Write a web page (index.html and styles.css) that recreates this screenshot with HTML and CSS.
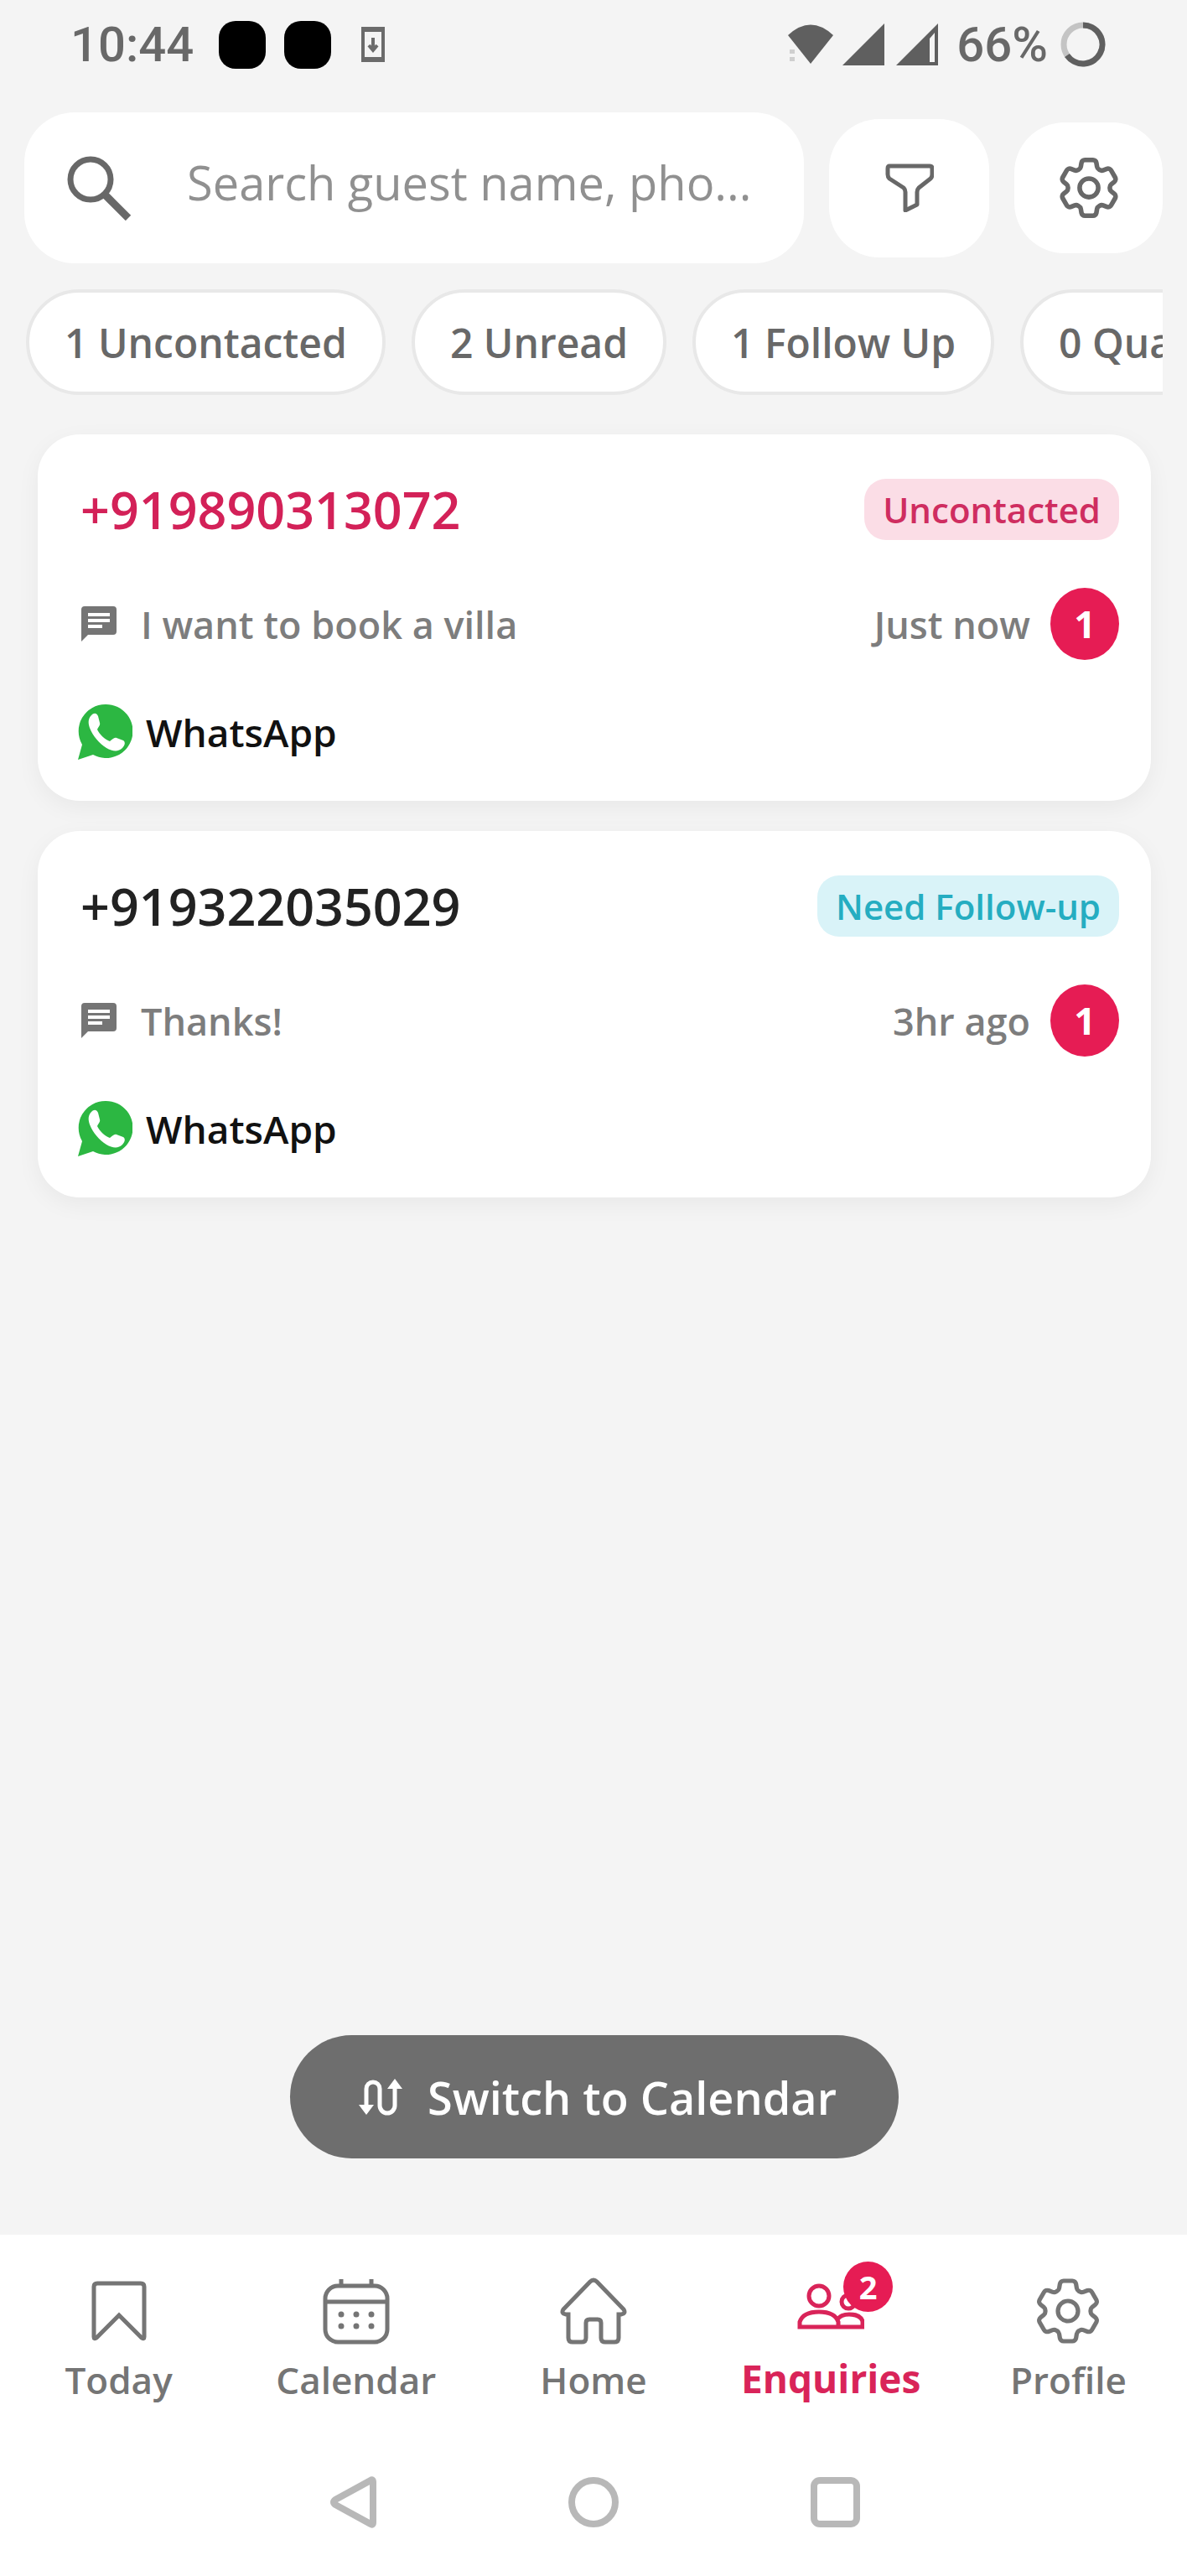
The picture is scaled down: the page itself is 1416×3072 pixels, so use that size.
FILE: index.html
```html
<!DOCTYPE html>
<html lang="en">

<head>
    <meta charset="utf-8">
    <meta name="viewport" content="width=device-width, initial-scale=1.0">
    <title>Enquiries</title>
    <link rel="stylesheet" href="styles.css">
</head>

<body>
    <!-- shared icons -->
    <svg class="sprite" aria-hidden="true">
        <symbol id="gear" viewBox="2 2 20 20">
            <path d="M9.594 3.94c.09-.542.56-.94 1.11-.94h2.593c.55 0 1.02.398 1.11.94l.213 1.281c.063.374.313.686.645.87.074.04.147.083.22.127.325.196.72.257 1.075.124l1.217-.456a1.125 1.125 0 0 1 1.37.49l1.296 2.247a1.125 1.125 0 0 1-.26 1.431l-1.003.827c-.293.241-.438.613-.43.992a7.723 7.723 0 0 1 0 .255c-.008.378.137.75.43.991l1.004.827c.424.35.534.955.26 1.43l-1.298 2.247a1.125 1.125 0 0 1-1.369.491l-1.217-.456c-.355-.133-.75-.072-1.076.124a6.47 6.47 0 0 1-.22.128c-.331.183-.581.495-.644.869l-.213 1.281c-.09.543-.56.94-1.11.94h-2.594c-.55 0-1.019-.398-1.11-.94l-.213-1.281c-.062-.374-.312-.686-.644-.87a6.52 6.52 0 0 1-.22-.127c-.325-.196-.72-.257-1.076-.124l-1.217.456a1.125 1.125 0 0 1-1.369-.49l-1.297-2.247a1.125 1.125 0 0 1 .26-1.431l1.004-.827c.292-.24.437-.613.43-.991a6.932 6.932 0 0 1 0-.255c.007-.38-.138-.751-.43-.992l-1.004-.827a1.125 1.125 0 0 1-.26-1.43l1.297-2.247a1.125 1.125 0 0 1 1.37-.491l1.216.456c.356.133.751.072 1.076-.124.072-.044.146-.086.22-.128.332-.183.582-.495.644-.869l.214-1.28Z" />
            <circle cx="12" cy="12" r="3" />
        </symbol>
        <symbol id="message" viewBox="0 0 44 44">
            <path fill="#757575" d="M5 1h34q4 0 4 4v26q0 4-4 4H9l-8 8V5q0-4 4-4z" />
            <path stroke="#fff" stroke-width="4" d="M9 11h26M9 18h26M9 25h17" />
        </symbol>
        <symbol id="whatsapp" viewBox="0 0 66 68">
            <path fill="#2cb742" d="M34 1a32 32 0 1 1-15 60L1 67l5-18A32 32 0 0 1 34 1z" />
            <path fill="#fff" d="M17 14c3-3 6-3 8 1l2 8c1 3-2 5-3 8 3 6 9 12 15 14 3-2 5-5 8-4l8 3c3 2 2 6-1 9-5 5-12 4-19 0C26 47 19 39 15 29c-2-6-2-11 2-15z" />
        </symbol>
    </svg>

    <div class="status">
        <div class="status_left">
            <span>10:44</span>
            <i class="app_dot"></i>
            <i class="app_dot"></i>
            <svg class="phone" width="28" height="42" viewBox="0 0 28 42" fill="none" stroke="#6b6b6b">
                <path stroke-width="4" d="M2 2h24v38H2z" />
                <path stroke-width="4" d="M2 4h24M2 38h24M14 13v14M9 22l5 6 5-6" />
            </svg>
        </div>
        <div class="status_right">
            <svg width="56" height="50" viewBox="0 0 56 50" fill="#5f5f5f">
                <path d="M1 14Q28-11 55 14L28 48z" />
                <path fill="#cfcfcf" d="M3 31h6v5H3zM3 40h6v5H3z" />
            </svg>
            <svg width="50" height="50" viewBox="0 0 50 50" fill="#5f5f5f">
                <path d="M50 0v50H0z" />
            </svg>
            <svg class="signal" width="50" height="50" viewBox="0 0 50 50" fill="#5f5f5f">
                <path fill-rule="evenodd" d="M50 0v50H0zM46 11l-6 7v28h6z" />
            </svg>
            <span>66%</span>
            <svg class="battery" width="56" height="56" viewBox="0 0 56 56" fill="none" stroke-width="7">
                <circle cx="28" cy="28" r="23" stroke="#c4c4c4" />
                <path stroke="#5f5f5f" d="M28 5a23 23 0 1 1-19 36" />
            </svg>
        </div>
    </div>

    <header>
        <label class="search">
            <svg width="78" height="78" viewBox="0 0 78 78" fill="none" stroke="#686868" stroke-width="7">
                <circle cx="29" cy="29" r="24" />
                <path d="M46 47l28 28" stroke-width="9" />
            </svg>
            <input type="text" placeholder="Search guest name, pho..." aria-label="Search">
        </label>
        <button class="icon_button filter" aria-label="Filter">
            <svg width="58" height="58" viewBox="0 0 58 58" fill="none" stroke="#686868" stroke-width="5" stroke-linejoin="round">
                <path d="M5 3h48q3 0 3 3v7q0 3-2 5L40 29q-2 2-2 5v15l-14 7V34q0-3-2-5L5 18q-2-2-2-5V6q0-3 2-3z" />
            </svg>
        </button>
        <button class="icon_button settings" aria-label="Settings">
            <svg class="gear" width="74" height="74">
                <use href="#gear" />
            </svg>
        </button>
    </header>

    <div class="chips">
        <button>1 Uncontacted</button>
        <button>2 Unread</button>
        <button>1 Follow Up</button>
        <button>0 Qualified</button>
    </div>

    <main>
        <article class="card unread">
            <div class="row">
                <h2>+919890313072</h2>
                <span class="tag uncontacted">Uncontacted</span>
            </div>
            <div class="row message">
                <svg width="44" height="44">
                    <use href="#message" />
                </svg>
                <p>I want to book a villa</p>
                <time>Just now</time>
                <span class="count">1</span>
            </div>
            <div class="row source">
                <svg width="66" height="68">
                    <use href="#whatsapp" />
                </svg>
                <p>WhatsApp</p>
            </div>
        </article>

        <article class="card">
            <div class="row">
                <h2>+919322035029</h2>
                <span class="tag followup">Need Follow-up</span>
            </div>
            <div class="row message">
                <svg width="44" height="44">
                    <use href="#message" />
                </svg>
                <p>Thanks!</p>
                <time>3hr ago</time>
                <span class="count">1</span>
            </div>
            <div class="row source">
                <svg width="66" height="68">
                    <use href="#whatsapp" />
                </svg>
                <p>WhatsApp</p>
            </div>
        </article>

        <button class="switch">
            <svg width="52" height="44" viewBox="0 0 52 44" fill="none" stroke="#fff" stroke-width="5">
                <path d="M9 34V12a8 8 0 0 1 16 0v20a9 9 0 0 0 18 0V10" />
                <path fill="#fff" stroke="none" d="M0 31h18l-9 12zM34 12h18L43 0z" />
            </svg>
            Switch to Calendar
        </button>
    </main>

    <nav class="tabs">
        <a href="#">
            <svg width="80" height="80" viewBox="0 0 80 80">
                <path d="M14 7h52q4 0 4 4v60q0 3-3 1L40 45 13 72q-3 2-3-1V11q0-4 4-4z" />
            </svg>
            Today
        </a>
        <a href="#">
            <svg width="80" height="80" viewBox="0 0 80 80">
                <rect x="3" y="10" width="74" height="67" rx="15" />
                <path d="M3 29h74M22 2v8M58 2v8" />
                <path class="dots" d="M22 44h0M40 44h0M58 44h0M22 58h0M40 58h0M58 58h0" />
            </svg>
            Calendar
        </a>
        <a href="#">
            <svg width="80" height="80" viewBox="0 0 80 80">
                <path d="M36 5q4-4 8 0l32 33q3 5-3 6h-3v28q0 5-5 5H54q-5 0-5-5V54q0-4-4-4H35q-4 0-4 4v18q0 5-5 5H15q-5 0-5-5V44H7q-6-1-3-6z" />
            </svg>
            Home
        </a>
        <a href="#" class="active">
            <span class="badge_holder">
                <svg width="80" height="80" viewBox="0 0 80 80">
                    <circle cx="26" cy="22" r="12" />
                    <circle cx="61" cy="29" r="8" />
                    <path d="M3 59V53q4-12 23-12t23 12v6zM49 59h29v-7q-3-8-16-8-10 0-14 6" />
                </svg>
                <span class="badge">2</span>
            </span>
            Enquiries
        </a>
        <a href="#">
            <svg class="gear" width="84" height="80">
                <use href="#gear" />
            </svg>
            Profile
        </a>
    </nav>

    <div class="system">
        <button aria-label="Back">
            <svg width="60" height="64" viewBox="0 0 60 64">
                <path d="M10 29L52 6q3-2 3 2v48q0 4-3 2L10 35q-4-3 0-6z" />
            </svg>
        </button>
        <button aria-label="Home">
            <svg width="60" height="64" viewBox="0 0 60 64">
                <circle cx="30" cy="32" r="26" />
            </svg>
        </button>
        <button aria-label="Recent">
            <svg width="60" height="64" viewBox="0 0 60 64">
                <rect x="5" y="6" width="51" height="52" rx="7" />
            </svg>
        </button>
    </div>
</body>

</html>
```
FILE: styles.css
```css
* {
    box-sizing: border-box;
}

body {
    margin: 0;
    min-height: 100vh;
    display: flex;
    flex-direction: column;
    background-color: #f4f4f4;
    font-family: "Open Sans", sans-serif;
    font-weight: 600;
    color: #686868;
}

button,
input {
    font: inherit;
    color: inherit;
    border: none;
    padding: 0;
}

svg {
    flex-shrink: 0;
}

h2,
p {
    margin: 0;
}

.sprite {
    position: absolute;
    width: 0;
    height: 0;
}

.gear {
    fill: none;
    stroke: #686868;
    stroke-width: 1.5;
}

/* status bar */

.status {
    height: 134px;
    padding: 15px 96px 0 84px;
    display: flex;
    justify-content: space-between;
    align-items: flex-start;
    font-family: Roboto, sans-serif;
    font-size: 58px;
    font-weight: 500;
    line-height: 76px;
}

.status_left,
.status_right {
    display: flex;
    align-items: center;
}

.app_dot {
    width: 56px;
    height: 57px;
    margin-left: 22px;
    border-radius: 20px;
    background-color: #000;
}

.app_dot:first-of-type {
    margin-left: 30px;
}

.phone {
    margin-left: 36px;
}

.status_right {
    gap: 10px;
}

.signal {
    margin: 0 12px 0 4px;
}

.battery {
    margin-left: 4px;
}

/* search */

header {
    display: flex;
    align-items: center;
    gap: 30px;
    padding: 0 29px;
}

.search {
    flex: 1;
    min-width: 0;
    height: 180px;
    padding: 0 50px;
    display: flex;
    align-items: center;
    gap: 66px;
    border-radius: 60px;
    background-color: #fff;
}

.search input {
    flex: 1;
    min-width: 0;
    padding-bottom: 14px;
    background: none;
    font-size: 56px;
    font-weight: 400;
    outline: none;
}

.search input::placeholder {
    color: #909090;
    opacity: 1;
}

.icon_button {
    display: flex;
    align-items: center;
    justify-content: center;
    border-radius: 60px;
    background-color: #fff;
}

.filter {
    width: 191px;
    height: 165px;
}

.settings {
    width: 177px;
    height: 156px;
}

/* chips */

.chips {
    display: flex;
    gap: 31px;
    margin: 31px 29px 0 31px;
    overflow: hidden;
}

.chips button {
    flex-shrink: 0;
    height: 126px;
    padding: 0 42px;
    border: 4px solid #e8e8e8;
    border-radius: 63px;
    background-color: #fff;
    font-size: 48px;
}

/* enquiries */

main {
    flex: 1;
    display: flex;
    flex-direction: column;
    gap: 36px;
    padding: 47px 43px 91px 45px;
}

.card {
    height: 437px;
    padding: 46px 38px 0 51px;
    border-radius: 50px;
    background-color: #fff;
    box-shadow: 0 8px 28px rgba(0, 0, 0, .05);
}

.row {
    display: flex;
    align-items: center;
    height: 86px;
    font-size: 46px;
}

h2 {
    flex: 1;
    font-size: 61px;
    font-weight: 600;
    color: #222;
}

.unread h2 {
    color: #d32158;
}

.tag {
    padding: 0 22px;
    border-radius: 26px;
    font-size: 42px;
    line-height: 73px;
}

.uncontacted {
    background-color: #fbdde6;
    color: #cf2d60;
}

.followup {
    background-color: #d9f3f8;
    color: #25adc1;
}

.message {
    margin-top: 51px;
    color: #7d7d7d;
    font-size: 45px;
}

.message p {
    flex: 1;
    margin-left: 28px;
}

.count {
    width: 82px;
    margin-left: 24px;
    border-radius: 50%;
    background-color: #e61c54;
    color: #fff;
    font-weight: 700;
    line-height: 86px;
    text-align: center;
}

.source {
    margin-top: 43px;
    gap: 16px;
    color: #111;
}

.source svg {
    margin-left: -4px;
}

.switch {
    display: flex;
    align-items: center;
    align-self: center;
    gap: 30px;
    height: 147px;
    margin-top: auto;
    padding: 0 74px 0 82px;
    border-radius: 74px;
    background-color: #6e6e6e;
    color: #fff;
    font-size: 54px;
}

/* bottom tabs */

.tabs {
    display: grid;
    grid-template-columns: repeat(5, 1fr);
    padding-top: 51px;
    background-color: #fff;
}

.tabs a {
    display: flex;
    flex-direction: column;
    align-items: center;
    gap: 12px;
    color: #757575;
    font-size: 44px;
    line-height: 60px;
    text-decoration: none;
}

.tabs svg {
    display: block;
    fill: none;
    stroke: #757575;
    stroke-width: 5;
}

.tabs .gear {
    stroke-width: 1.3;
}

.tabs .dots {
    stroke-width: 7;
    stroke-linecap: round;
}

.tabs .active {
    gap: 10px;
    color: #d92459;
    font-size: 46px;
    font-weight: 700;
}

.tabs .active svg {
    stroke: #d92459;
}

.badge_holder {
    position: relative;
}

.badge {
    position: absolute;
    top: -19px;
    right: -34px;
    width: 59px;
    border-radius: 50%;
    background-color: #e61c54;
    color: #fff;
    font-size: 38px;
    line-height: 60px;
    text-align: center;
}

/* system buttons */

.system {
    display: flex;
    justify-content: center;
    gap: 228px;
    padding: 84px 0 56px;
    background-color: #fff;
}

.system button {
    display: flex;
    background: none;
}

.system svg {
    fill: none;
    stroke: #b8b8b8;
    stroke-width: 8;
}
```
